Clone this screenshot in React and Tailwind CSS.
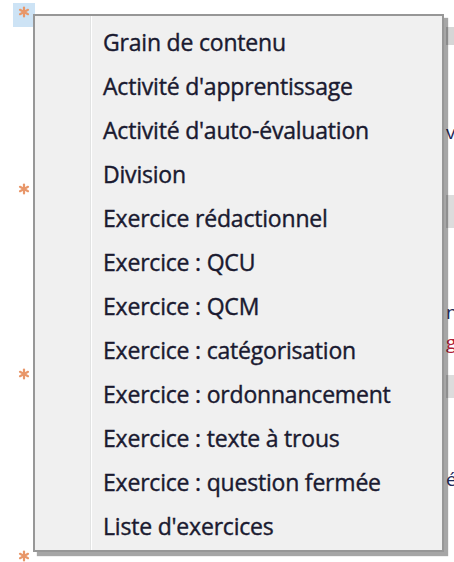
import React from "react";

const items = [
  "Grain de contenu",
  "Activité d'apprentissage",
  "Activité d'auto-évaluation",
  "Division",
  "Exercice rédactionnel",
  "Exercice : QCU",
  "Exercice : QCM",
  "Exercice : catégorisation",
  "Exercice : ordonnancement",
  "Exercice : texte à trous",
  "Exercice : question fermée",
  "Liste d'exercices",
];

function Star() {
  return (
    <svg width="12" height="12" viewBox="0 0 12 12">
      <g stroke="#e8976a" strokeWidth="2.2" strokeLinecap="round">
        <line x1="6" y1="1.5" x2="6" y2="10.5" />
        <line x1="2" y1="3.8" x2="10" y2="8.2" />
        <line x1="2" y1="8.2" x2="10" y2="3.8" />
      </g>
    </svg>
  );
}

export default function App() {
  return (
    <div
      className="relative h-[562px] w-[454px] overflow-hidden bg-white"
      style={{ fontFamily: '"Open Sans", "Noto Sans", sans-serif' }}
    >
      {/* page behind the menu */}
      <div className="flex h-full">
        <div className="flex w-[40px] flex-col items-center pl-[8px]">
          <div className="mt-[3px] flex h-[30px] w-[22px] items-start justify-center bg-[#cde3f5] pt-[3px]">
            <Star />
          </div>
          <div className="mt-[156px]">
            <Star />
          </div>
          <div className="mt-[173px]">
            <Star />
          </div>
          <div className="mt-[170px]">
            <Star />
          </div>
        </div>
        <div className="flex-1" />
        <div className="flex w-[8px] flex-col text-[19px] leading-none text-[#1f2a5a]">
          <div className="mt-[27px] h-[18px] bg-[#d6d6d6]" />
          <div className="mt-[78px] h-[20px]">v</div>
          <div className="mt-[52px] h-[33px] bg-[#dcdcdc]" />
          <div className="mt-[75px] h-[20px]">n</div>
          <div className="mt-[10px] h-[20px] text-[#b0203a]">g</div>
          <div className="mt-[22px] h-[23px] bg-[#dcdcdc]" />
          <div className="mt-[72px] h-[20px]">é</div>
        </div>
      </div>

      {/* context menu */}
      <div className="absolute left-[33px] top-[14px] flex h-[538px] w-[411px] border-2 border-[#979797] bg-[#f0f0f0] shadow-[4px_4px_1px_rgba(0,0,0,0.35)]">
        <div className="w-[56px] border-r border-[#e2e3e3]" />
        <div className="w-px bg-white" />
        <ul className="flex flex-col pl-[11px] pt-[4px] text-[23px] leading-[44px] tracking-[-0.2px] text-[#1a1a30] [-webkit-text-stroke:0.4px_#1a1a30]">
          {items.map((t) => (
            <li key={t} className="h-[44px] whitespace-nowrap">
              {t}
            </li>
          ))}
        </ul>
      </div>
    </div>
  );
}
